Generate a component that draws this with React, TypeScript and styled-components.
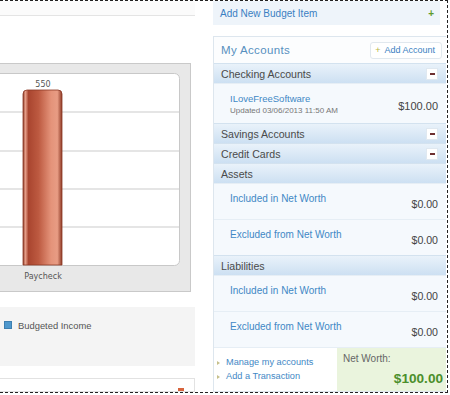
import React from "react";
import styled, { createGlobalStyle } from "styled-components";

const GlobalStyle = createGlobalStyle`
  body {
    margin: 0;
    background: #ffffff;
    font-family: "Liberation Sans", Arial, sans-serif;
  }
`;

const Frame = styled.div`
  width: 448px;
  height: 393px;
  box-sizing: border-box;
  border-top: 1px dashed #222;
  border-right: 1px dashed #222;
  border-bottom: 1px dashed #222;
  display: flex;
  overflow: hidden;
`;

const LeftCol = styled.div`
  width: 195px;
  display: flex;
  flex-direction: column;
`;

const TopStrip = styled.div`
  height: 14px;
  background: #fbfbfb;
  border-bottom: 1px solid #e4e4e4;
`;

const ChartBox = styled.div`
  margin-top: 47px;
  width: 191px;
  height: 230px;
  box-sizing: border-box;
  border: 1px solid #c9c9c9;
  border-left: none;
  background: #e8e8e8;
  padding: 9px 10px 0 0;
`;

const XLabel = styled.div`
  width: 86px;
  text-align: center;
  margin-top: 2px;
  font-family: "DejaVu Sans", Verdana, sans-serif;
  font-size: 8px;
  color: #555;
`;

const Legend = styled.div`
  margin-top: 15px;
  height: 59px;
  background: #f4f4f4;
  display: flex;
  align-items: flex-start;
  padding: 14px 0 0 4px;
  box-sizing: border-box;
  gap: 6px;
`;

const Swatch = styled.span`
  width: 8px;
  height: 8px;
  box-sizing: border-box;
  background: ${(p: { color: string }) => p.color};
  border: 1px solid #3d7fb0;
`;

const LegendText = styled.span`
  font-size: 9.4px;
  color: #555;
  line-height: 9px;
`;

const BottomPanel = styled.div`
  margin-top: 12px;
  flex: 1;
  border: 1px solid #e2e2e2;
  border-left: none;
  display: flex;
  justify-content: flex-end;
  padding: 9px 10px 0 0;
`;

const CollapseMark = styled.span`
  width: 6px;
  height: 3px;
  background: #d7643c;
`;

const RightCol = styled.div`
  width: 233px;
  margin-left: 18px;
  display: flex;
  flex-direction: column;
`;

const AddItem = styled.div`
  width: 227px;
  height: 24px;
  box-sizing: border-box;
  background: #eef4fa;
  display: flex;
  align-items: center;
  justify-content: space-between;
  padding: 0 6px 0 7px;
  font-size: 10px;
  color: #3a7fc2;
`;

const GreenPlus = styled.span`
  color: #5e9a2a;
  font-size: 10px;
  font-weight: bold;
`;

const Panel = styled.div`
  margin-top: 11px;
  width: 233px;
  flex: 1;
  box-sizing: border-box;
  border: 1px solid #dde6ee;
  border-right: none;
  display: flex;
  flex-direction: column;
  overflow: hidden;
`;

const PanelHead = styled.div`
  height: 26px;
  background: #fcfdfe;
  display: flex;
  align-items: center;
  justify-content: space-between;
  padding: 0 4px 0 7px;
`;

const PanelTitle = styled.span`
  font-size: 11.5px;
  letter-spacing: 0.35px;
  color: #5790be;
`;

const AddButton = styled.span`
  height: 17px;
  box-sizing: border-box;
  padding: 0 6px 0 4px;
  border: 1px solid #e1e8ee;
  border-radius: 3px;
  background: #ffffff;
  display: flex;
  align-items: center;
  gap: 4px;
  font-size: 9px;
  color: #3a7fc2;
`;

const YellowPlus = styled.span`
  color: #b7b545;
  font-size: 9px;
`;

const GroupHeader = styled.div`
  height: 20px;
  box-sizing: border-box;
  background: linear-gradient(#e9f2fa, #cde0f2);
  border-top: 1px solid #d3e2ef;
  display: flex;
  align-items: center;
  justify-content: space-between;
  padding: 0 8px 0 7px;
  font-size: 10.6px;
  color: #4a4a4a;
`;

const MinusBox = styled.span`
  width: 12px;
  height: 12px;
  box-sizing: border-box;
  background: #ffffff;
  border: 1px solid #dfe8f0;
  display: flex;
  align-items: center;
  justify-content: center;
  &::after {
    content: "";
    width: 5px;
    height: 2px;
    background: #6e3030;
  }
`;

const Row = styled.div<{ $h: number }>`
  height: ${(p) => p.$h}px;
  box-sizing: border-box;
  background: #f5f9fd;
  border-top: 1px solid #e6eef5;
  display: flex;
  justify-content: space-between;
  padding: 0 8px 0 16px;
`;

const RowInfo = styled.div`
  display: flex;
  flex-direction: column;
  padding-top: ${(p: { $top: number }) => p.$top}px;
`;

const AccountName = styled.span`
  font-size: ${(p: { $size: number }) => p.$size}px;
  color: #3f88c5;
  line-height: 12px;
`;

const Updated = styled.span`
  font-size: 8px;
  color: #777;
  margin-top: 1px;
  line-height: 10px;
`;

const Amount = styled.span`
  font-size: ${(p: { $size: number; $top: number }) => p.$size}px;
  color: #444;
  padding-top: ${(p) => p.$top}px;
  line-height: 12px;
`;

const Footer = styled.div`
  flex: 1;
  display: flex;
  border-top: 1px solid #e6eef5;
`;

const Links = styled.div`
  flex: 1;
  display: flex;
  flex-direction: column;
  padding: 9px 0 0 3px;
  gap: 3px;
`;

const LinkItem = styled.span`
  display: flex;
  align-items: center;
  gap: 6px;
  font-size: 9.2px;
  color: #3f88c5;
  line-height: 11px;
  &::before {
    content: "";
    width: 0;
    height: 0;
    border-top: 2px solid transparent;
    border-bottom: 2px solid transparent;
    border-left: 3px solid #c6c08c;
  }
`;

const NetBox = styled.div`
  width: 109px;
  background: #eaf4dd;
  display: flex;
  flex-direction: column;
  padding: 5px 3px 0 6px;
  box-sizing: border-box;
`;

const NetLabel = styled.span`
  font-size: 10px;
  color: #666;
`;

const NetValue = styled.span`
  align-self: flex-end;
  margin-top: 7px;
  font-size: 13.6px;
  font-weight: bold;
  color: #4b8f2b;
`;

const BarChart = () => (
  <svg width="180" height="193" viewBox="0 0 180 193">
    <defs>
      <linearGradient id="barFill" x1="0" x2="1" y1="0" y2="0">
        <stop offset="0" stopColor="#8a3724" />
        <stop offset="0.06" stopColor="#e7a08a" />
        <stop offset="0.14" stopColor="#a9452f" />
        <stop offset="0.4" stopColor="#bd5a41" />
        <stop offset="0.72" stopColor="#e4937a" />
        <stop offset="0.88" stopColor="#e89c84" />
        <stop offset="1" stopColor="#8f3b27" />
      </linearGradient>
    </defs>
    <rect x="-6" y="0.5" width="185.5" height="192" rx="5" fill="#ffffff" stroke="#c8c8c8" />
    {[39, 78, 116, 154].map((y) => (
      <line key={y} x1="0" x2="179" y1={y} y2={y} stroke="#dcdcdc" strokeWidth="1.5" />
    ))}
    <path d="M23,192 L23,21 Q23,17 27,17 L58,17 Q62,17 62,21 L62,192 Z" fill="url(#barFill)" stroke="#8a3724" strokeWidth="0.8" />
    <text x="43" y="14" textAnchor="middle" fontFamily="DejaVu Sans, Verdana, sans-serif" fontSize="8" fill="#555">
      550
    </text>
  </svg>
);

const groups = [
  { name: "Savings Accounts" },
  { name: "Credit Cards" },
];

const worthRows = ["Included in Net Worth", "Excluded from Net Worth"];

const App = () => {
  return (
    <>
      <GlobalStyle />
      <Frame>
        <LeftCol>
          <TopStrip />
          <ChartBox>
            <BarChart />
            <XLabel>Paycheck</XLabel>
          </ChartBox>
          <Legend>
            <Swatch color="#4e98cd" />
            <LegendText>Budgeted Income</LegendText>
          </Legend>
          <BottomPanel>
            <CollapseMark />
          </BottomPanel>
        </LeftCol>
        <RightCol>
          <AddItem>
            Add New Budget Item
            <GreenPlus>+</GreenPlus>
          </AddItem>
          <Panel>
            <PanelHead>
              <PanelTitle>My Accounts</PanelTitle>
              <AddButton>
                <YellowPlus>+</YellowPlus>
                Add Account
              </AddButton>
            </PanelHead>
            <GroupHeader>
              Checking Accounts
              <MinusBox />
            </GroupHeader>
            <Row $h={40}>
              <RowInfo $top={9}>
                <AccountName $size={9.5}>ILoveFreeSoftware</AccountName>
                <Updated>Updated 03/06/2013 11:50 AM</Updated>
              </RowInfo>
              <Amount $size={11} $top={16}>$100.00</Amount>
            </Row>
            {groups.map((g) => (
              <GroupHeader key={g.name}>
                {g.name}
                <MinusBox />
              </GroupHeader>
            ))}
            <GroupHeader>Assets</GroupHeader>
            {worthRows.map((r) => (
              <Row $h={36} key={"a" + r}>
                <RowInfo $top={9}>
                  <AccountName $size={10}>{r}</AccountName>
                </RowInfo>
                <Amount $size={10.6} $top={14}>$0.00</Amount>
              </Row>
            ))}
            <GroupHeader>Liabilities</GroupHeader>
            {worthRows.map((r) => (
              <Row $h={36} key={"l" + r}>
                <RowInfo $top={9}>
                  <AccountName $size={10}>{r}</AccountName>
                </RowInfo>
                <Amount $size={10.6} $top={14}>$0.00</Amount>
              </Row>
            ))}
            <Footer>
              <Links>
                <LinkItem>Manage my accounts</LinkItem>
                <LinkItem>Add a Transaction</LinkItem>
              </Links>
              <NetBox>
                <NetLabel>Net Worth:</NetLabel>
                <NetValue>$100.00</NetValue>
              </NetBox>
            </Footer>
          </Panel>
        </RightCol>
      </Frame>
    </>
  );
};

export default App;
